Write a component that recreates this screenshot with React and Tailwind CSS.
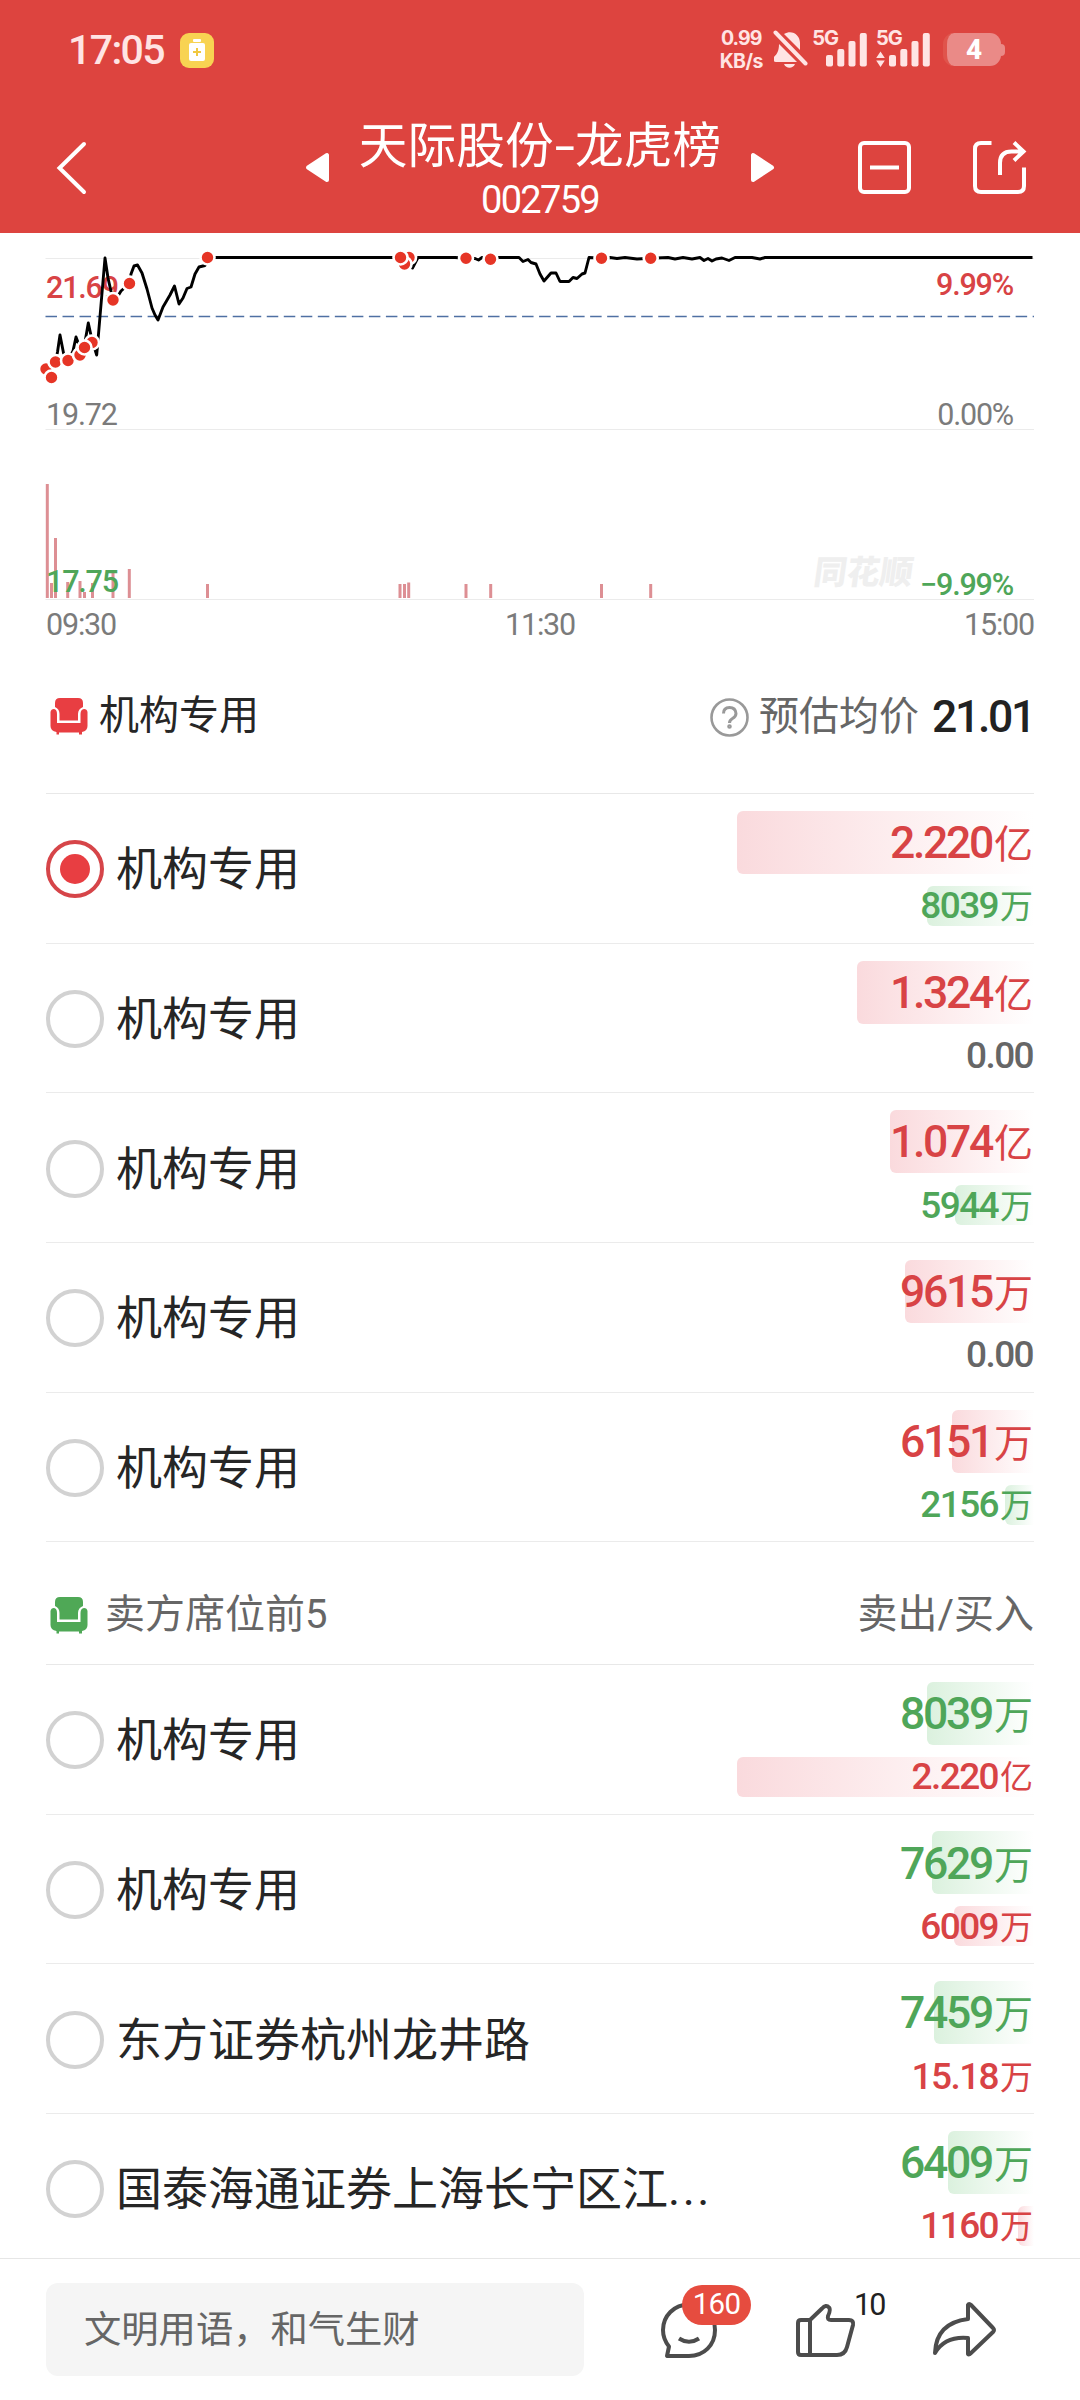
const ROBOTO = "font-[Roboto,'Noto_Sans_CJK_SC',sans-serif]";

const buyers = [
  { name: "机构专用", checked: true, top: { n: "2.220", u: "亿", w: 297, tone: "red" }, sub: { n: "8039", u: "万", w: 107, tone: "green" } },
  { name: "机构专用", top: { n: "1.324", u: "亿", w: 177, tone: "red" }, sub: { n: "0.00", u: "", w: 0, tone: "gray" } },
  { name: "机构专用", top: { n: "1.074", u: "亿", w: 144, tone: "red" }, sub: { n: "5944", u: "万", w: 79, tone: "green" } },
  { name: "机构专用", top: { n: "9615", u: "万", w: 129, tone: "red" }, sub: { n: "0.00", u: "", w: 0, tone: "gray" } },
  { name: "机构专用", top: { n: "6151", u: "万", w: 82, tone: "red" }, sub: { n: "2156", u: "万", w: 29, tone: "green" } },
];

const sellers = [
  { name: "机构专用", top: { n: "8039", u: "万", w: 107, tone: "green" }, sub: { n: "2.220", u: "亿", w: 297, tone: "red" } },
  { name: "机构专用", top: { n: "7629", u: "万", w: 102, tone: "green" }, sub: { n: "6009", u: "万", w: 80, tone: "red" } },
  { name: "东方证券杭州龙井路", top: { n: "7459", u: "万", w: 100, tone: "green" }, sub: { n: "15.18", u: "万", w: 0, tone: "red" } },
  { name: "国泰海通证券上海长宁区江", more: true, top: { n: "6409", u: "万", w: 86, tone: "green" }, sub: { n: "1160", u: "万", w: 16, tone: "red" } },
];

const textTone = { red: "text-[#d84345]", green: "text-[#4fa659]", gray: "text-[#666]" };
const barTone = { red: "from-[#fadadd]", green: "from-[#dbf1de]", gray: "from-white" };

function SignalBars({ arrows }) {
  return (
    <svg width={arrows ? 54 : 41} height="34" viewBox={arrows ? "-13 0 54 34" : "0 0 41 34"} fill="#ffe4e4">
      {arrows && <path d="M-12.800 25l4.300-6.500l4.300 6.500zM-12.800 27.500l4.300 6.500l4.300-6.500z" />}
      <rect x="0" y="22" width="7" height="11.500" rx="2" />
      <rect x="11.300" y="16" width="7" height="17.500" rx="2" />
      <rect x="22.500" y="8" width="7" height="25.500" rx="2" />
      <rect x="33.800" y="0" width="7" height="33.500" rx="2" />
    </svg>
  );
}

function StatusBar() {
  return (
    <div className="flex h-[100px] items-center pl-[68px] pr-[75px] text-[#ffe4e4]">
      <span className="mt-px w-[97px] text-[41px] font-medium leading-none tracking-[-1.600px]">17:05</span>
      <svg className="ml-[15px]" width="34" height="35" viewBox="0 0 34 35">
        <rect width="34" height="35" rx="9" fill="#f8d352" />
        <rect x="13" y="6" width="8" height="3" rx="1" fill="#fff" />
        <rect x="9" y="10" width="16" height="18" rx="2" fill="#fff" />
        <path d="M17 15v8M13 19h8" stroke="#f0c840" strokeWidth="2" />
      </svg>
      <div className="ml-auto flex h-[42px] items-start">
        <div className="flex w-[46px] flex-col items-center font-[Inter,sans-serif] text-[19.500px] font-bold">
          <span className="mt-[-1px] h-[22px] leading-[20px] tracking-[-0.900px]">0.99</span>
          <span className="h-[22px] leading-[22px] tracking-[-0.600px]">KB/s</span>
        </div>
        <svg className="ml-[9px] mt-px" width="35" height="39" viewBox="0 0 35 39" fill="#ffe4e4">
          <path d="M11 4C19-1 27 5 27 13v7zM6 14c0 7-2 10-5 13v4q0 1 2 1h21zM11 34h11c-2 5-9 5-11 0z" />
          <path d="M2.500 2.500l30 31" stroke="#ffe4e4" strokeWidth="4" strokeLinecap="round" />
        </svg>
        <span className="ml-[4px] mt-[-1px] font-[Inter,sans-serif] text-[20px] font-bold leading-[20px] tracking-[-1px]">5G</span>
        <div className="ml-[-12px] mt-[4px]"><SignalBars /></div>
        <div className="relative ml-[9px] mt-[4px] flex">
          <span className="absolute left-0 top-[-5px] font-[Inter,sans-serif] text-[20px] font-bold leading-[20px] tracking-[-1px]">5G</span>
          <SignalBars arrows />
        </div>
        <div className="ml-[13px] mt-[4px] flex items-center">
          <div className="flex h-[33px] w-[58px] items-center justify-center rounded-[11px] border-l-4 border-[#e0544c] bg-[#ea8a87] text-[28px] font-extrabold leading-none text-white">4</div>
          <div className="h-[12px] w-[4px] rounded-r-[4px] bg-[#ea8a87]" />
        </div>
      </div>
    </div>
  );
}

function NavBar() {
  return (
    <div className="flex h-[133px] items-start text-white">
      <svg className="ml-[56px] mt-[40px]" width="33" height="56" viewBox="0 0 33 56" fill="none" stroke="#fff" strokeWidth="4" strokeLinecap="round">
        <path d="M28 4L3.500 28L28 52" />
      </svg>
      <svg className="ml-[216px] mt-[52px]" width="25" height="31" viewBox="0 0 25 31" fill="#fff" stroke="#fff" strokeWidth="4" strokeLinejoin="round">
        <path d="M3 15.500L22 3V28Z" />
      </svg>
      <div className="flex w-[420px] flex-col items-center">
        <span className="mt-[18px] flex whitespace-nowrap text-[48.700px] leading-[58px]">
          天际股份<span className="mx-[4px] inline-block scale-x-150">-</span>龙虎榜
        </span>
        <span className="mt-[2px] text-[38px] leading-[44px] tracking-[-1.700px]">002759</span>
      </div>
      <svg className="mt-[52px]" width="25" height="31" viewBox="0 0 25 31" fill="#fff" stroke="#fff" strokeWidth="4" strokeLinejoin="round">
        <path d="M22 15.500L3 3V28Z" />
      </svg>
      <svg className="ml-[83px] mt-[41px]" width="53" height="53" viewBox="0 0 53 53" fill="none" stroke="#fff" strokeWidth="4">
        <rect x="2" y="2" width="49" height="49" rx="4" />
        <path d="M12 26.500h29" />
      </svg>
      <svg className="ml-[62px] mt-[41px]" width="56" height="53" viewBox="0 0 56 53" fill="none" stroke="#fff" strokeWidth="4">
        <path d="M18.500 2H8Q2 2 2 8V45Q2 51 8 51H45Q51 51 51 45V26.500" />
        <path d="M27 34V22Q27 10.500 38.500 10.500H50M41 1.500L50.500 10.500L41 19.500" />
      </svg>
    </div>
  );
}

const pricePoints =
  "46,369 51,374 55.500,362 57.500,352 60,335 63.500,353 68,360.500 73,351 76,337 79,345 84.500,345 88.300,323 92,340 96.700,355 98.500,334 105,258 108,278 113,300 118,296 121,291 129.500,283.500 131,274 134,266 137.500,265 142,273 147,289 152,308 155,315 158,320 163,307 170,295 174.500,286 179,304 183,298 187,288.500 191,287 195,274 199,267 205,265.500 208,257.500 409,257.500 412.500,268 418,257.500 455,257.500 466,258.300 475,258.500 478.500,260 482,257.500 490.500,259.300 499,257.500 519,257.500 523,261.500 528,259.500 531,262.500 536,264 540,274 544,281 551,273 556,273 560,281.500 569,281.500 573,277.500 577,278.500 582,274 585,273 589,257.500 601.500,258.300 610,257.500 617,258.500 625,257.500 637,259 650.700,258.300 668,257.500 675,259 683,257.500 692,259 700,257.500 704,260.500 708,258.500 712,261 716,259 722,258 729,260.500 735,257.500 752,257.500 760,259 765,257.500 1032.500,257.500";

const dots = [
  [46, 369], [51.5, 377.5], [55.5, 362], [68, 360.5], [80, 355], [92, 342.5], [84.5, 347.5], [113, 300], [129.5, 283.5], [207.5, 257.5],
  [409, 257.5], [404.5, 264], [400.5, 257.5], [466, 258.3], [490.5, 259.3], [601.5, 258.3], [650.7, 258.3],
];

const volumes = [
  [47.3, 484], [51.5, 583], [55.5, 538], [67.7, 582], [80, 581], [84.5, 592], [92.5, 583], [113, 570], [129.3, 569], [207.5, 584],
  [400, 584], [404.5, 584], [408.7, 582.5], [466, 584], [490.7, 584], [601.5, 584], [650.7, 584],
];

function Chart() {
  const label = "absolute text-[30.500px] leading-[36px] tracking-[-1.200px]";
  return (
    <div className="relative h-[417px]">
      <span className="absolute left-[814px] top-[322px] skew-x-[-8deg] text-[33px] font-black leading-[36px] text-[#efefef]">同花顺</span>
      <svg className="absolute left-0 top-0" width="1080" height="417" viewBox="0 233 1080 417" fill="none">
        <path d="M45.500 258.500H1034M45.500 429.500H1034M45.500 599.500H1034" stroke="#ebebeb" />
        {volumes.map(([x, y]) => (
          <rect key={x} x={x - 1.5} y={y} width="3" height={598 - y} fill="#dd8f94" />
        ))}
      </svg>
      <span className={label + " left-[46px] top-[37px] font-medium text-[#d84345]"}>21.69</span>
      <span className={label + " left-[46px] top-[164px] text-[#7b7b7b]"}>19.72</span>
      <span className={label + " left-[46px] top-[331px] font-medium text-[#4fa659]"}>17.75</span>
      <span className={label + " right-[67px] top-[34px] font-medium text-[#d84345]"}>9.99%</span>
      <span className={label + " right-[67px] top-[164px] text-[#7b7b7b]"}>0.00%</span>
      <span className={label + " right-[67px] top-[334px] font-medium text-[#4fa659]"}>−9.99%</span>
      <span className={label + " left-[46px] top-[374px] text-[#7b7b7b]"}>09:30</span>
      <span className={label + " left-[505px] top-[374px] text-[#7b7b7b]"}>11:30</span>
      <span className={label + " right-[46px] top-[374px] text-[#7b7b7b]"}>15:00</span>
      <svg className="absolute left-0 top-0" width="1080" height="417" viewBox="0 233 1080 417" fill="none">
        <path d="M45.500 316.500H1034" stroke="#4f70a3" strokeWidth="1.400" strokeDasharray="11.500 5.520" />
        <polyline points={pricePoints} stroke="#000" strokeWidth="2.900" strokeLinejoin="round" />
        {dots.map(([x, y]) => (
          <circle key={x} cx={x} cy={y} r="7" fill="#e63526" stroke="#fff" strokeWidth="2.600" />
        ))}
      </svg>
    </div>
  );
}

function Sofa({ color }) {
  return (
    <svg width="38" height="37" viewBox="0 0 38 37" fill={color}>
      <path d="M5 9V5Q5 0 10 0H28Q33 0 33 5V9Q28 11 28 16V22.500H9.500V16Q9.500 11 5 9Z" />
      <path d="M0.500 14Q1 11 4 11Q7 11.500 7 16V25H30.500V16Q30.500 11.500 34 11Q37 11 37.500 14V28Q37.500 33 32 34V36.500H29V34.500H9V36.500H6.500V34Q0.500 33 0.500 28Z" />
    </svg>
  );
}

function Amount({ value, large }) {
  return (
    <div className={"relative flex w-[297px] items-center justify-end pr-px " + (large ? "h-[63px]" : "h-[40px]")}>
      {value.w > 0 && (
        <div className={"absolute inset-y-0 right-0 rounded-l-[6px] bg-linear-to-r to-white " + barTone[value.tone]} style={{ width: value.w }} />
      )}
      <div className={"relative flex items-baseline leading-none " + (large ? "top-px " : "") + textTone[value.tone]}>
        <span className={large ? "text-[44.500px] font-medium tracking-[-2.300px]" : "text-[37px] font-medium tracking-[-1.600px]"}>{value.n}</span>
        {value.u && <span className={large ? "ml-[2px] text-[39px]" : "ml-[2px] text-[33px]"}>{value.u}</span>}
      </div>
    </div>
  );
}

function SeatRow({ row }) {
  return (
    <div className="flex h-[149.700px] items-center border-b border-[#ebebeb]">
      {row.checked ? (
        <div className="mt-px flex size-[58px] items-center justify-center rounded-full border-4 border-[#d64549]">
          <div className="size-[30px] rounded-full bg-[#e83e42]" />
        </div>
      ) : (
        <div className="mt-[2px] size-[58px] rounded-full border-4 border-[#d2d2d2]" />
      )}
      <span className="ml-[12px] mt-[2px] whitespace-nowrap text-[46px] leading-none text-[#262626]">
        {row.name}
        {row.more && <span className="tracking-[2.500px]">...</span>}
      </span>
      <div className="ml-auto flex flex-col gap-[12px]">
        <Amount value={row.top} large />
        <Amount value={row.sub} />
      </div>
    </div>
  );
}

function BottomBar() {
  return (
    <div className="relative flex h-[142px] items-start border-t border-[#e6e6e6] bg-white pl-[46px]">
      <div className="mt-[24px] flex h-[93px] w-[538px] items-center rounded-[12px] bg-[#f5f5f5] pl-[38px] pt-[2px] text-[37.300px] leading-none text-[#666]">
        文明用语，和气生财
      </div>
      <div className="relative ml-[76px] mt-[43px]">
        <svg width="58" height="57" viewBox="0 0 58 57" fill="none" stroke="#4c4c4c" strokeWidth="4" strokeLinejoin="round">
          <path d="M29 2.500C14 2.500 3 14 3 28Q3 37 9 44.500L7 54H29C44 54 55 43 55 28S44 2.500 29 2.500Z" />
          <path d="M19 36.500Q29 43 39 36.500" />
        </svg>
        <span className="absolute left-[22px] top-[-17px] flex h-[40px] w-[69px] items-center justify-center rounded-full bg-[#e64c3f] text-[29.500px] leading-none tracking-[-0.800px] text-white">160</span>
      </div>
      <div className="relative ml-[76px] mt-[43px]">
        <svg width="64" height="57" viewBox="0 0 64 57" fill="none" stroke="#4c4c4c" strokeWidth="4" strokeLinejoin="round">
          <path d="M7 18H16L28 6.500Q32 2 35 5.500Q37 7.500 34 14Q33 18 37 18H55Q60 18 59 23L53 45Q51 53 43 53H7Q4 53 4 50V21Q4 18 7 18Z" />
          <path d="M16 18V53" />
        </svg>
        <span className="absolute left-[60px] top-[-12px] text-[30.500px] leading-[30px] tracking-[-2px] text-[#222]">10</span>
      </div>
      <svg className="ml-[73px] mt-[42px]" width="66" height="57" viewBox="0 0 66 57" fill="none" stroke="#4c4c4c" strokeWidth="4" strokeLinejoin="round">
        <path d="M37 4V18Q5 22 4 52Q14 35 37 37V53Q38 54 40 52L62 31Q64 29 62 27L40 4Q38 2 37 4Z" />
      </svg>
    </div>
  );
}

export default function App() {
  return (
    <div className={"flex h-[2400px] w-[1080px] flex-col overflow-hidden bg-white " + ROBOTO}>
      <header className="h-[233px] shrink-0 bg-[#dd443f]">
        <StatusBar />
        <NavBar />
      </header>
      <main className="h-[2025px] shrink-0 overflow-hidden">
        <Chart />
        <div className="px-[46px]">
          <div className="flex h-[144px] items-start border-b border-[#e8e8e8] pt-[46px]">
            <div className="flex h-[40px] items-center pl-[4px]">
              <Sofa color="#e83e42" />
              <span className="ml-[11px] text-[40px] leading-none text-[#262626]">机构专用</span>
            </div>
            <div className="ml-auto flex h-[42px] items-center">
              <svg width="39" height="39" viewBox="0 0 39 39" fill="none" stroke="#999" strokeWidth="2.600">
                <circle cx="19.500" cy="19.500" r="18" />
                <path d="M13.500 15.500Q13.500 9.500 19.500 9.500T26 15.500Q26 18.500 22.500 20.500Q19.500 22.200 19.500 25" strokeWidth="3" />
                <circle cx="19.500" cy="28.500" r="1" />
              </svg>
              <span className="ml-[10px] text-[40px] leading-none text-[#666]">预估均价</span>
              <span className="ml-[13px] text-[44.500px] font-medium leading-none tracking-[-2.300px] text-[#222]">21.01</span>
            </div>
          </div>
          {buyers.map((row, i) => (
            <SeatRow key={i} row={row} />
          ))}
          <div className="flex h-[122.500px] items-center border-b border-[#e8e8e8] pb-[7px] pt-[31px]">
            <div className="flex items-center pl-[4px]">
              <Sofa color="#4fa856" />
              <span className="ml-[17px] text-[40px] leading-none text-[#666]">卖方席位前5</span>
            </div>
            <span className="ml-auto text-[40px] leading-none text-[#666]">卖出/买入</span>
          </div>
          {sellers.map((row, i) => (
            <SeatRow key={i} row={row} />
          ))}
        </div>
      </main>
      <BottomBar />
    </div>
  );
}
